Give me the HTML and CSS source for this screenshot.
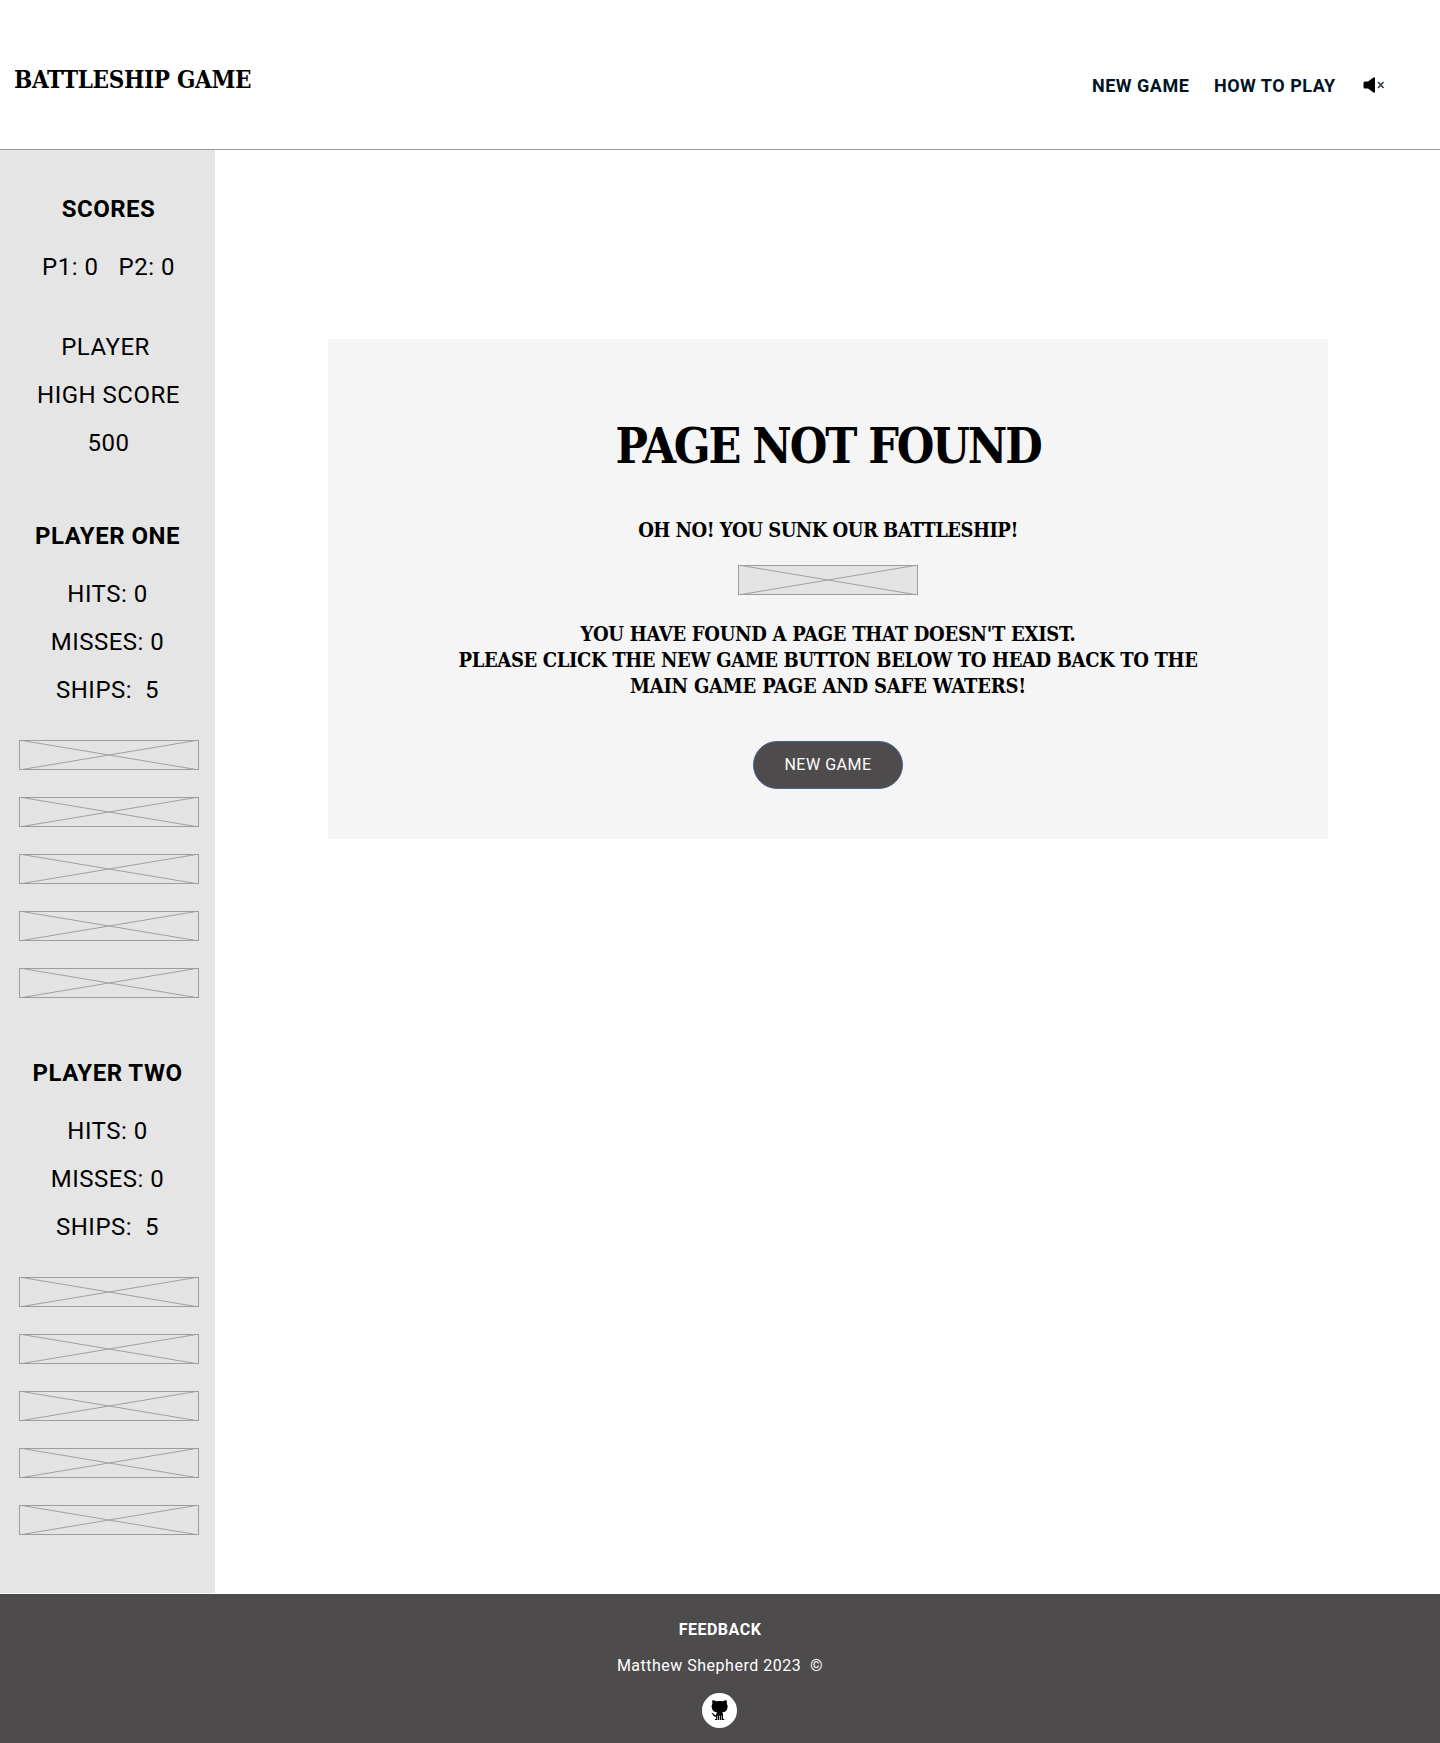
FILE: index.html
```html
<!DOCTYPE html>
<html lang="en">
<head>
<meta charset="utf-8">
<title>Battleship Game</title>
<link rel="stylesheet" href="styles.css">
</head>
<body>
<svg class="defs" aria-hidden="true">
  <symbol id="ship" viewBox="0 0 180 30">
    <rect x=".5" y=".5" width="179" height="29" fill="#e4e4e4" stroke="#9d9d9d"/>
    <path d="M3 .5 177 29.5M177 .5 3 29.5" fill="none" stroke="#a0a0a0"/>
  </symbol>
</svg>
<header class="header">
  <a class="logo slab">BATTLESHIP GAME</a>
  <nav class="nav">
    <a class="nav-new">NEW GAME</a>
    <a class="nav-how">HOW TO PLAY</a>
    <svg class="mute" viewBox="0 0 22 16"><path d="M0.5 6Q.5 4.5 2 4.5H5L10.5.5H12V15.5H10.5L5 11.5H2Q.5 11.5 .5 10Z"/><path d="M15 5 20.5 11M20.5 5 15 11" stroke="#3c4654" stroke-width="1.8"/></svg>
  </nav>
</header>
<div class="body">
  <aside class="sidebar">
    <section class="scores">
      <h2 class="scores-title">SCORES</h2>
      <p class="pair"><span>P1: 0</span><span>P2: 0</span></p>
      <div class="high">
        <p class="name">PLAYER</p>
        <p>HIGH SCORE</p>
        <p>500</p>
      </div>
    </section>
    <section class="player">
      <h2>PLAYER ONE</h2>
      <p>HITS: 0</p>
      <p>MISSES: 0</p>
      <p>SHIPS:&nbsp; 5</p>
      <div class="fleet">
        <svg class="ship"><use href="#ship"/></svg>
        <svg class="ship"><use href="#ship"/></svg>
        <svg class="ship"><use href="#ship"/></svg>
        <svg class="ship"><use href="#ship"/></svg>
        <svg class="ship"><use href="#ship"/></svg>
      </div>
    </section>
    <section class="player">
      <h2>PLAYER TWO</h2>
      <p>HITS: 0</p>
      <p>MISSES: 0</p>
      <p>SHIPS:&nbsp; 5</p>
      <div class="fleet">
        <svg class="ship"><use href="#ship"/></svg>
        <svg class="ship"><use href="#ship"/></svg>
        <svg class="ship"><use href="#ship"/></svg>
        <svg class="ship"><use href="#ship"/></svg>
        <svg class="ship"><use href="#ship"/></svg>
      </div>
    </section>
  </aside>
  <main class="main">
    <div class="panel slab">
      <h1>PAGE NOT FOUND</h1>
      <p class="lead">OH NO! YOU SUNK OUR BATTLESHIP!</p>
      <svg class="ship"><use href="#ship"/></svg>
      <p class="message"><span class="line-found">YOU HAVE FOUND A PAGE THAT DOESN'T EXIST.</span><br>PLEASE CLICK THE NEW GAME BUTTON BELOW TO HEAD BACK TO THE<br><span class="line-safe">MAIN GAME PAGE AND SAFE WATERS!</span></p>
      <button class="button">NEW GAME</button>
    </div>
  </main>
</div>
<footer class="footer">
  <a class="feedback">FEEDBACK</a>
  <p class="credit">Matthew Shepherd 2023&nbsp; ©</p>
  <a class="github"><svg viewBox="0 0 35 35"><path d="M10.5 7.3Q12.4 7 14 8.3Q17.5 7.5 21 8.3Q22.6 7 24.5 7.3Q25.2 9 24.8 10.4Q26 12 25.3 15.4Q24.6 19 20.2 19.3Q21 20.2 21 21.5V26H22.2V27H19.8V22.4H19.2V27H17.8V22.4H17.1V27H15.6V22.4H15V27H13V26H14.1V23.6Q11.8 23.9 10.9 21.8Q10.4 20.8 9.4 20.2Q9.8 19.6 10.9 20.2Q11.9 21.1 12.5 21.8Q13.1 22.3 14.2 22Q14.2 20 15.2 19.3Q10.7 19 10 15.4Q9.2 12 10.4 10.4Q9.9 9 10.5 7.3Z"/></svg></a>
</footer>
</body>
</html>
```
FILE: styles.css
```css
* { box-sizing: border-box; }
body {
  margin: 0;
  background: #fff;
  color: #000;
  font-family: Roboto, "Liberation Sans", sans-serif;
}
h1, h2, p { margin: 0; }
svg { display: block; }
.defs { width: 0; height: 0; position: absolute; }
.slab { font-family: "Roboto Slab", "DejaVu Serif Condensed", "DejaVu Serif", serif; }

.header {
  display: flex;
  justify-content: space-between;
  height: 150px;
  border-bottom: 1px solid #999;
  padding: 66px 55px 0 14px;
}
.logo {
  font-size: 24px;
  line-height: 28px;
  font-weight: 700;
  font-stretch: condensed;
  letter-spacing: -.32px;
  white-space: nowrap;
}
.nav {
  display: flex;
  align-items: center;
  height: 38px;
  color: #001424;
  font-size: 18px;
  font-weight: 700;
  letter-spacing: .5px;
  white-space: nowrap;
}
.nav-new { width: 122px; }
.nav-how { width: 149px; }
.mute { width: 22px; height: 16px; }

.body { display: flex; height: 1444px; }
.sidebar {
  width: 215px;
  height: 1443px;
  padding-top: 35px;
  background: #e5e5e5;
  text-align: center;
  font-size: 24px;
  line-height: 48px;
  letter-spacing: .5px;
}
.sidebar h2 { font-size: 24px; font-weight: 700; margin-bottom: 10px; }
.scores { height: 327px; padding-left: 2px; }
.pair { display: flex; justify-content: center; gap: 20px; }
.high { margin-top: 32px; }
.name { padding-right: 6px; }
.player { height: 537px; }
.fleet {
  display: flex;
  flex-direction: column;
  gap: 27px;
  padding: 26px 0 0 19px;
}
.ship { width: 180px; height: 30px; }

.main { flex: 1; padding: 189px 0 0 113px; }
.panel {
  display: flex;
  flex-direction: column;
  align-items: center;
  width: 1000px;
  height: 500px;
  padding-top: 77px;
  background: #f5f5f5;
  text-align: center;
  font-weight: 700;
  font-stretch: condensed;
  white-space: nowrap;
}
.panel h1 { font-size: 48px; line-height: 60px; letter-spacing: -2.1px; }
.lead { margin-top: 41px; font-size: 20px; line-height: 26px; letter-spacing: -.52px; }
.panel .ship { margin-top: 22px; }
.message { margin-top: 26px; font-size: 20px; line-height: 26px; letter-spacing: -.37px; }
.line-found { letter-spacing: -.28px; }
.line-safe { letter-spacing: -.2px; }
.button {
  width: 150px;
  height: 48px;
  margin-top: 42px;
  padding: 0 0 1px;
  border: 1px solid #48648a;
  border-radius: 24px;
  background: #4d4b4c;
  color: #fff;
  font: 400 16px Roboto, sans-serif;
  letter-spacing: .5px;
}

.footer {
  display: flex;
  flex-direction: column;
  align-items: center;
  height: 149px;
  padding-top: 26px;
  background: #4d4b4c;
  color: #fff;
  font-size: 16px;
  line-height: 20px;
}
.feedback { font-weight: 700; letter-spacing: .5px; }
.credit { margin-top: 16px; letter-spacing: .5px; }
.github {
  width: 35px;
  height: 35px;
  margin: 17px 1px 0 0;
  border-radius: 50%;
  background: #fff;
}
```
